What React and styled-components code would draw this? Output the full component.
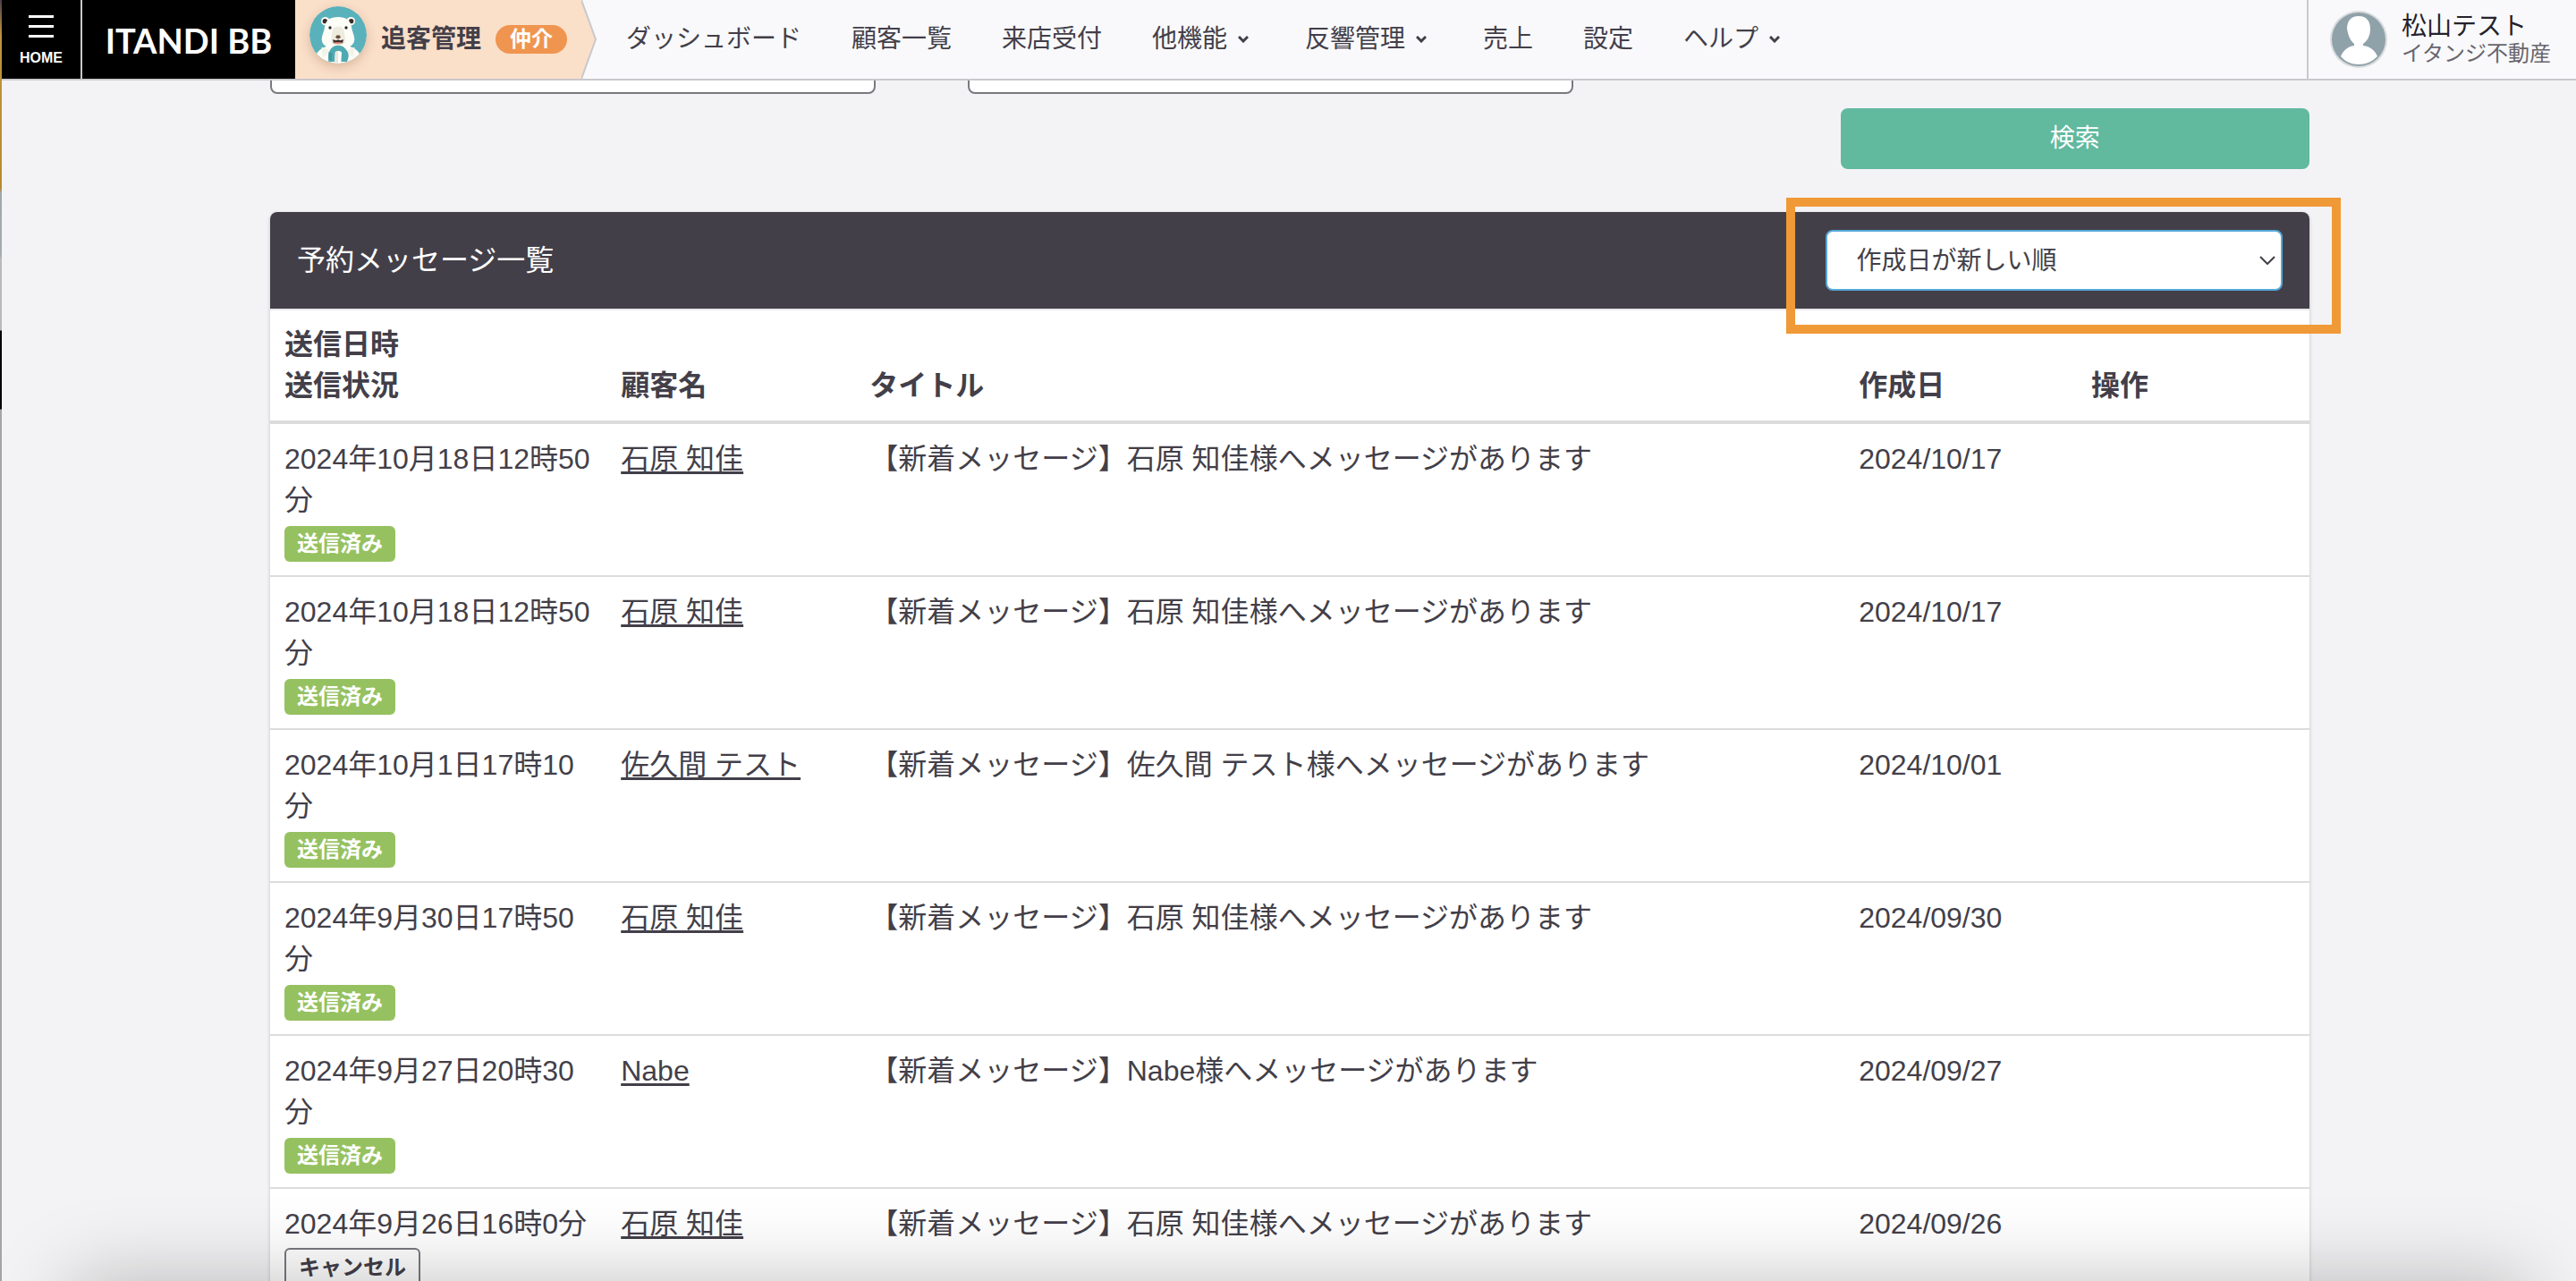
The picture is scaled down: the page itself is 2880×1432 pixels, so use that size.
import React from "react";
import styled, { createGlobalStyle } from "styled-components";

const menuItems = [
  { label: "ダッシュボード" },
  { label: "顧客一覧" },
  { label: "来店受付" },
  { label: "他機能", hasMenu: true },
  { label: "反響管理", hasMenu: true },
  { label: "売上" },
  { label: "設定" },
  { label: "ヘルプ", hasMenu: true },
];

const messages = [
  {
    id: 1,
    sentAt: "2024年10月18日12時50分",
    sent: true,
    customer: "石原 知佳",
    createdAt: "2024/10/17",
  },
  {
    id: 2,
    sentAt: "2024年10月18日12時50分",
    sent: true,
    customer: "石原 知佳",
    createdAt: "2024/10/17",
  },
  {
    id: 3,
    sentAt: "2024年10月1日17時10分",
    sent: true,
    customer: "佐久間 テスト",
    createdAt: "2024/10/01",
  },
  {
    id: 4,
    sentAt: "2024年9月30日17時50分",
    sent: true,
    customer: "石原 知佳",
    createdAt: "2024/09/30",
  },
  {
    id: 5,
    sentAt: "2024年9月27日20時30分",
    sent: true,
    customer: "Nabe",
    createdAt: "2024/09/27",
  },
  {
    id: 6,
    sentAt: "2024年9月26日16時0分",
    sent: false,
    customer: "石原 知佳",
    createdAt: "2024/09/26",
  },
];

const BearIcon = () => (
  <BearSvg viewBox="0 0 192 192" aria-hidden="true">
    <defs>
      <clipPath id="bear-clip">
        <circle cx="96" cy="96" r="96" />
      </clipPath>
    </defs>
    <g clipPath="url(#bear-clip)">
      <rect width="192" height="192" fill="#59b2bb" />
      <path
        d="M14 192 C16 160 32 142 58 134 L134 134 C160 142 176 160 178 192 Z"
        fill="#fdfdf8"
      />
      <circle cx="53" cy="50" r="14" fill="#fdfdf8" />
      <circle cx="139" cy="50" r="14" fill="#fdfdf8" />
      <circle cx="52" cy="50" r="8" fill="#3a2a2c" />
      <circle cx="140" cy="50" r="8" fill="#3a2a2c" />
      <path
        d="M96 36 C122 36 138 46 141 70 C143 86 151 98 151 112 C150 134 126 144 96 144 C66 144 42 134 41 112 C41 98 49 86 51 70 C54 46 70 36 96 36 Z"
        fill="#fdfdf8"
      />
      <path
        d="M96 68 C110 68 116 76 117 90 L121 116 C120 126 108 130 96 130 C84 130 72 126 73 116 L75 90 C76 76 82 68 96 68 Z"
        fill="#eeebdf"
      />
      <circle cx="69" cy="72" r="5" fill="#2f2528" />
      <circle cx="123" cy="72" r="5" fill="#2f2528" />
      <ellipse cx="96" cy="103" rx="8" ry="6" fill="#6a5140" />
      <path
        d="M78 112 L90 115 L96 112 L102 115 L114 112 L111 124 L81 124 Z"
        fill="#3a2a2c"
      />
      <path d="M82 121 H110 Q108 127 96 127 Q84 127 82 121 Z" fill="#e08f7c" />
      <path
        d="M64 186 C60 160 68 132 94 131 C112 130 120 140 128 152 C134 164 130 176 126 186 Z"
        fill="#4fa9b2"
      />
      <path d="M84 192 L86 154 Q96 144 108 154 L106 192 Z" fill="#fdfdf8" />
      <path d="M84 192 L87 152 L96 150 V192 Z" fill="#e6e8e0" />
      <path d="M40 138 Q58 138 66 152 Q58 166 44 172 Z" fill="#f4f3ea" />
      <path d="M152 138 Q134 138 128 152 Q134 166 148 172 Z" fill="#f4f3ea" />
      <path d="M64 154 L76 158 L74 182 L66 178 Z" fill="#3f98a2" />
    </g>
  </BearSvg>
);

const UserIcon = () => (
  <AvatarSvg viewBox="0 0 64 64" aria-hidden="true">
    <circle cx="32" cy="32" r="32" fill="#d9dcde" />
    <circle cx="32" cy="32" r="30" fill="#90a2a9" />
    <path
      d="M32 6 C41 6 45 12 45 20 C45 26 43 33 37 37 L37 39 C45 40 50 44 53 51 C47 57 40 60 32 60 C24 60 17 57 12 51 C15 44 20 40 27 39 L27 37 C22 33 20 26 19 20 C19 12 23 6 32 6 Z"
      fill="#fff"
    />
  </AvatarSvg>
);

const Caret = () => (
  <CaretSvg viewBox="0 0 12 8" aria-hidden="true">
    <path d="M1 1 L6 6 L11 1" fill="none" stroke="#433f49" strokeWidth="3" />
  </CaretSvg>
);

const Header = () => (
  <HeaderBar>
    <HomeButton type="button">
      <Bars>
        <span />
        <span />
        <span />
      </Bars>
      HOME
    </HomeButton>
    <Logo href="#">ITANDI BB</Logo>
    <Product>
      <ProductBody>
        <BearIcon />
        <ProductName>追客管理</ProductName>
        <ProductTag>仲介</ProductTag>
      </ProductBody>
      <ProductTip viewBox="0 0 18 88" aria-hidden="true">
        <path d="M0 0 L16 44 L0 88 Z" fill="#fadfc9" />
        <path
          d="M0 0 L16 44 L0 88"
          fill="none"
          stroke="#c9c8cc"
          strokeWidth="2"
        />
      </ProductTip>
    </Product>
    <Menu>
      {menuItems.map(({ label, hasMenu }) => (
        <MenuLink href="#" key={label}>
          {label}
          {hasMenu && <Caret />}
        </MenuLink>
      ))}
    </Menu>
    <User>
      <UserIcon />
      <div>
        <UserName>松山テスト</UserName>
        <UserCompany>イタンジ不動産</UserCompany>
      </div>
    </User>
  </HeaderBar>
);

const SearchForm = () => (
  <Form onSubmit={(e) => e.preventDefault()}>
    <Fields>
      <TextField type="text" aria-label="顧客名" />
      <TextField type="text" aria-label="タイトル" />
    </Fields>
    <SearchButton type="submit">検索</SearchButton>
  </Form>
);

const MessageRow = ({ message }) => (
  <tr>
    <Td>
      {message.sentAt}
      <Status>
        <Badge $sent={message.sent}>
          {message.sent ? "送信済み" : "キャンセル"}
        </Badge>
      </Status>
    </Td>
    <Td>
      <CustomerLink href="#">{message.customer}</CustomerLink>
    </Td>
    <Td>【新着メッセージ】{message.customer}様へメッセージがあります</Td>
    <Td>{message.createdAt}</Td>
    <Td />
  </tr>
);

const App = () => {
  return (
    <>
      <GlobalStyle />
      <Window>
        <Edge />
        <Page>
          <Header />
          <Content>
            <SearchForm />
            <Card>
              <CardHeader>
                <CardTitle>予約メッセージ一覧</CardTitle>
                <SortBox>
                  <SortSelect aria-label="作成日" defaultValue="new">
                    <option value="new">作成日が新しい順</option>
                  </SortSelect>
                  <SortArrow viewBox="0 0 18 10" aria-hidden="true">
                    <path
                      d="M1 1 L9 9 L17 1"
                      fill="none"
                      stroke="#433f49"
                      strokeWidth="2"
                    />
                  </SortArrow>
                  <Highlight />
                </SortBox>
              </CardHeader>
              <Table>
                <thead>
                  <tr>
                    <Th $width="16.5%">
                      送信日時
                      <br />
                      送信状況
                    </Th>
                    <Th $width="12.2%">顧客名</Th>
                    <Th>タイトル</Th>
                    <Th $width="11.4%">作成日</Th>
                    <Th $width="11.4%">操作</Th>
                  </tr>
                </thead>
                <tbody>
                  {messages.map((message) => (
                    <MessageRow key={message.id} message={message} />
                  ))}
                </tbody>
              </Table>
            </Card>
          </Content>
        </Page>
        <BottomShade />
      </Window>
    </>
  );
};

export default App;

const GlobalStyle = createGlobalStyle`
  * {
    box-sizing: border-box;
  }

  body {
    margin: 0;
    color: #433f49;
    background: #f3f3f5;
    font-family: "Liberation Sans", "Noto Sans CJK JP", sans-serif;
  }

  a {
    color: inherit;
    text-decoration: none;
  }

  button,
  input,
  select {
    font-family: inherit;
  }
`;

const Window = styled.div`
  position: relative;
  display: flex;
  height: 100vh;
  overflow: hidden;
`;

const Edge = styled.div`
  width: 2px;
  background: linear-gradient(
    #4a3f48,
    #c09540 40px,
    #b98a2c 210px,
    #9fa8ac 216px,
    #a5abae 284px,
    #b9b9bb 290px,
    #b9b9bb 369px,
    #000 370px,
    #000 457px,
    #a5a5a7 458px
  );
`;

const Page = styled.div`
  flex: 1;
  min-width: 0;
  display: flex;
  flex-direction: column;
`;

const HeaderBar = styled.header`
  flex: none;
  display: flex;
  height: 90px;
  background: #f9f9fb;
  border-bottom: 2px solid #c9c8cc;
`;

const HomeButton = styled.button`
  width: 90px;
  padding: 6px 0 0;
  display: flex;
  flex-direction: column;
  align-items: center;
  justify-content: center;
  gap: 11px;
  border: none;
  border-right: 2px solid #c9c8cc;
  background: #000;
  color: #fff;
  font-weight: 700;
  font-size: 16px;
  line-height: 24px;
`;

const Bars = styled.span`
  display: flex;
  flex-direction: column;
  gap: 8px;

  span {
    width: 28px;
    height: 3px;
    background: #fff;
  }
`;

const Logo = styled.a`
  width: 238px;
  display: flex;
  align-items: center;
  justify-content: center;
  padding-top: 2px;
  background: #000;
  color: #fff;
  font-family: Lato, sans-serif;
  font-weight: 700;
  font-size: 38px;
  line-height: 48px;
`;

const Product = styled.div`
  display: flex;
`;

const ProductBody = styled.div`
  width: 320px;
  display: flex;
  align-items: center;
  padding-left: 16px;
  background: #fadfc9;
`;

const BearSvg = styled.svg`
  width: 64px;
  height: 64px;
  margin-bottom: 10px;
  border-radius: 50%;
  box-shadow: 0 4px 12px rgba(120, 70, 30, 0.25);
`;

const ProductName = styled.span`
  margin: 0 16px;
  font-weight: 700;
  font-size: 28px;
  line-height: 40px;
`;

const ProductTag = styled.span`
  padding: 0 16px;
  border-radius: 16px;
  background: #f09550;
  color: #fff;
  font-weight: 700;
  font-size: 24px;
  line-height: 32px;
`;

const ProductTip = styled.svg`
  width: 18px;
  height: 88px;
`;

const Menu = styled.nav`
  flex: 1;
  display: flex;
  align-items: center;
  gap: 56px;
  padding-left: 32px;
`;

const MenuLink = styled.a`
  display: flex;
  align-items: center;
  font-size: 28px;
  line-height: 40px;
  white-space: nowrap;
`;

const CaretSvg = styled.svg`
  width: 12px;
  height: 8px;
  margin: 0 7px 0 12px;
`;

const User = styled.div`
  display: flex;
  align-items: center;
  gap: 16px;
  padding: 0 28px 0 24px;
  border-left: 2px solid #c9c8cc;
`;

const AvatarSvg = styled.svg`
  width: 64px;
  height: 64px;
`;

const UserName = styled.div`
  color: #25222b;
  font-size: 28px;
  line-height: 32px;
`;

const UserCompany = styled.div`
  color: #68656d;
  font-size: 24px;
  line-height: 28px;
`;

const Content = styled.main`
  flex: 1;
  min-height: 0;
  overflow: hidden;
  padding: 0 298px 0 300px;
`;

const Form = styled.form`
  display: flex;
  flex-direction: column;
  margin-top: -53px;
`;

const Fields = styled.div`
  display: flex;
  gap: 103px;
`;

const TextField = styled.input`
  width: 29.7%;
  height: 68px;
  padding: 0 24px;
  border: 2px solid #7b7880;
  border-radius: 8px;
  background: #fff;
  font-size: 28px;
`;

const SearchButton = styled.button`
  align-self: flex-end;
  width: 23%;
  height: 68px;
  margin: 16px 0 48px;
  border: none;
  border-radius: 8px;
  background: #61b99e;
  color: #fff;
  font-size: 28px;
  line-height: 40px;
`;

const Card = styled.section`
  border-radius: 8px;
  background: #fff;
  box-shadow: 0 2px 4px rgba(0, 0, 0, 0.2);
`;

const CardHeader = styled.div`
  display: flex;
  align-items: center;
  justify-content: space-between;
  padding: 20px 30px;
  border-radius: 8px 8px 0 0;
  background: #433f49;
`;

const CardTitle = styled.h1`
  margin: 0;
  color: #fff;
  font-weight: 400;
  font-size: 32px;
  line-height: 46px;
`;

const SortBox = styled.div`
  position: relative;
  display: grid;
  align-items: center;
  width: 23%;
`;

const SortSelect = styled.select`
  grid-area: 1 / 1;
  height: 68px;
  padding: 0 32px;
  appearance: none;
  border: 2px solid #56a8d8;
  border-radius: 8px;
  background: #fff;
  color: #433f49;
  font-size: 28px;
  outline: none;
`;

const SortArrow = styled.svg`
  grid-area: 1 / 1;
  justify-self: end;
  width: 18px;
  height: 10px;
  margin-right: 8px;
  pointer-events: none;
`;

/* callout frame around the sort select */
const Highlight = styled.div`
  position: absolute;
  top: -36px;
  right: -65px;
  bottom: -48px;
  left: -44px;
  border: 10px solid #f09937;
  pointer-events: none;
`;

const Table = styled.table`
  width: 100%;
  table-layout: fixed;
  border-spacing: 0;
  border-top: 2px solid #e9e9ec;
  font-size: 32px;
  line-height: 46px;
`;

const Th = styled.th`
  width: ${({ $width }) => $width || "auto"};
  padding: 15px 16px 16px;
  border-bottom: 4px solid #dcdcdd;
  font-weight: 700;
  text-align: left;
  vertical-align: bottom;
`;

const Td = styled.td`
  padding: 16px;
  border-bottom: 2px solid #dcdcdd;
  vertical-align: top;
`;

const CustomerLink = styled.a`
  text-decoration: underline;
  text-decoration-thickness: 3px;
  text-underline-offset: 3px;
`;

const Status = styled.div`
  display: flex;
  align-items: center;
  height: 45px;
  padding-top: 6px;
`;

const Badge = styled.span`
  padding: 0 14px;
  border: ${({ $sent }) => ($sent ? "none" : "2px solid #7b7880")};
  border-radius: 6px;
  background: ${({ $sent }) => ($sent ? "#96c160" : "transparent")};
  color: ${({ $sent }) => ($sent ? "#fff" : "#433f49")};
  font-weight: 700;
  font-size: 24px;
  line-height: 40px;
`;

const BottomShade = styled.div`
  position: absolute;
  right: 56px;
  bottom: -200px;
  left: 80px;
  height: 200px;
  box-shadow: 0 0 90px rgba(0, 0, 0, 0.25);
  pointer-events: none;
`;
